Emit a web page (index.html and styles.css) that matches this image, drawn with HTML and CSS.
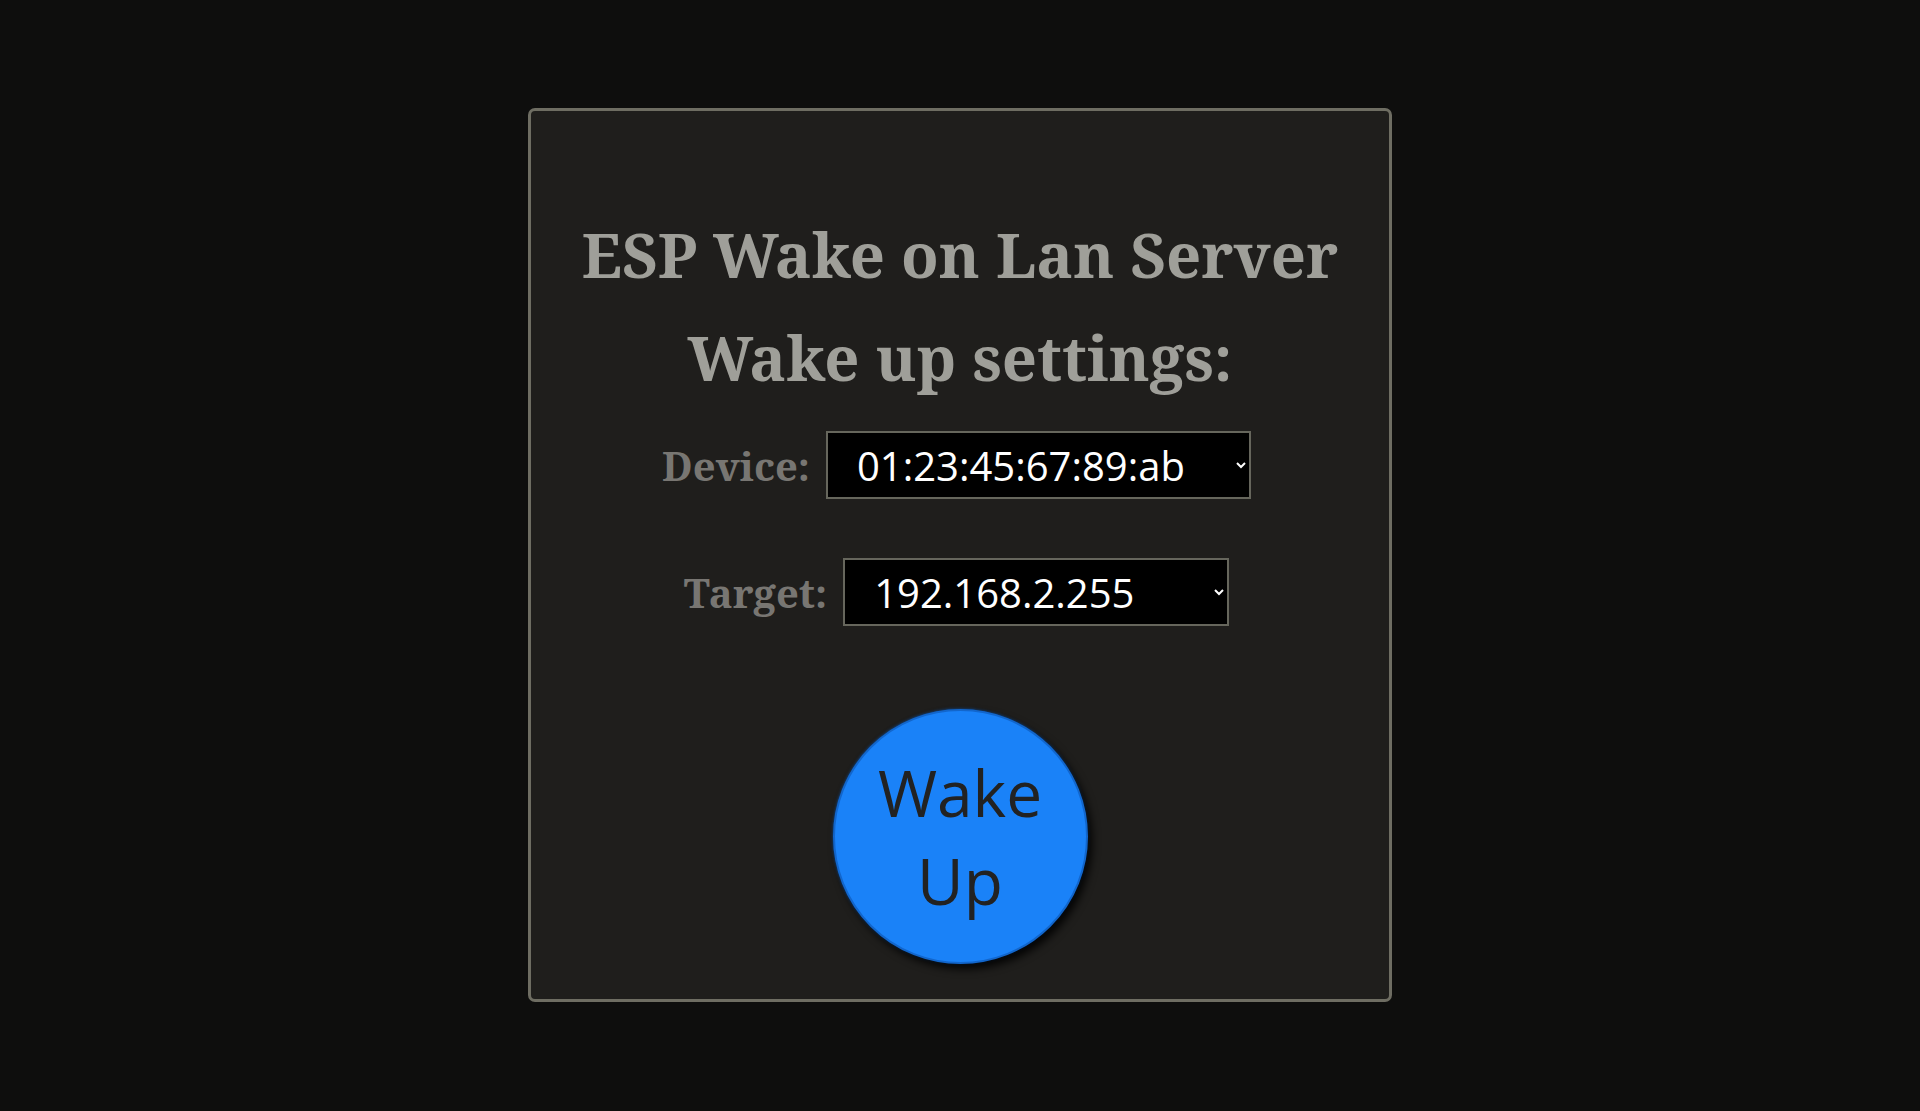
FILE: index.html
```html
<!DOCTYPE html>
<html lang="en">
<head>
<meta charset="utf-8">
<title>ESP Wake on Lan Server</title>
<link rel="stylesheet" href="styles.css">
</head>
<body>
<main class="card">
  <h1 class="title">ESP Wake on Lan Server</h1>
  <h2 class="title">Wake up settings:</h2>
  <div class="row row-device">
    <label class="label" for="device">Device:</label>
    <select id="device" class="picker picker-device">
      <option>01:23:45:67:89:ab</option>
    </select>
  </div>
  <div class="row row-target">
    <label class="label" for="target">Target:</label>
    <select id="target" class="picker picker-target">
      <option>192.168.2.255</option>
    </select>
  </div>
  <button class="wake" type="button">Wake<br>Up</button>
</main>
</body>
</html>
```

FILE: styles.css
```css
html, body {
  margin: 0;
  padding: 0;
  background: #0e0e0d;
}

body {
  display: flex;
  justify-content: center;
  align-items: flex-start;
  min-height: 1111px;
  font-family: "Open Sans", "Noto Sans", sans-serif;
}

.card {
  box-sizing: border-box;
  width: 864px;
  height: 894px;
  margin-top: 108px;
  background: #1f1e1c;
  border: 3px solid #6e6d62;
  border-radius: 7px;
  display: flex;
  flex-direction: column;
  align-items: center;
  padding-top: 92px;
}

.title {
  margin: 0;
  font-family: "Noto Serif", "DejaVu Serif", serif;
  font-weight: bold;
  font-size: 61.6px;
  line-height: 103px;
  color: #9f9f99;
  white-space: nowrap;
}

.row {
  display: flex;
  align-items: center;
  gap: 16px;
  padding-right: 7px;
}

.row-device {
  margin-top: 22px;
}

.row-target {
  margin-top: 59px;
}

.label {
  font-family: "Noto Serif", "DejaVu Serif", serif;
  font-weight: bold;
  font-size: 40px;
  color: #787672;
}

.picker {
  box-sizing: border-box;
  height: 68px;
  padding: 0 0 0 25px;
  background: #000;
  color: #fff;
  border: 2px solid #66665c;
  border-radius: 0;
  font-family: "Open Sans", "Noto Sans", sans-serif;
  font-size: 40px;
}

.picker-device {
  width: 425px;
}

.picker-target {
  width: 386px;
}

.wake {
  box-sizing: border-box;
  width: 255px;
  height: 255px;
  margin-top: 83px;
  border-radius: 50%;
  border: 2px solid #1266cc;
  background: #1a82f8;
  color: #222;
  font-family: "Open Sans", "Noto Sans", sans-serif;
  font-size: 64px;
  line-height: 88px;
  padding: 0;
  box-shadow: 4px 5px 8px rgba(0, 0, 0, 0.9), 0 0 3px #0d5ab8;
}
```
